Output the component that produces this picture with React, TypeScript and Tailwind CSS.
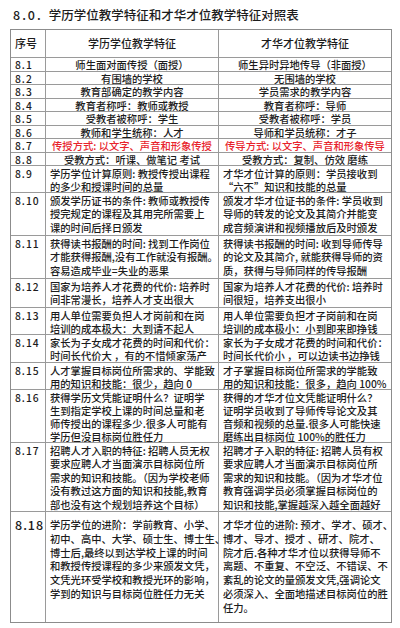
import React from "react";

type Row = {
  no: string;
  left: string[];
  right: string[];
  h: string;
  lh?: string;
  center?: boolean;
  red?: boolean;
};

const rows: Row[] = [
  { no: "8.1", left: ["师生面对面传授（面授）"], right: ["师生异时异地传导（非面授）"], h: "h-[13.5px]", center: true },
  { no: "8.2", left: ["有围墙的学校"], right: ["无围墙的学校"], h: "h-[13.5px]", center: true },
  { no: "8.3", left: ["教育部确定的教学内容"], right: ["学员需求的教学内容"], h: "h-[13.5px]", center: true },
  { no: "8.4", left: ["教育者称呼：教师或教授"], right: ["教育者称呼：导师"], h: "h-[13.5px]", center: true },
  { no: "8.5", left: ["受教者被称呼：学生"], right: ["受教者被称呼：学员"], h: "h-[13.5px]", center: true },
  { no: "8.6", left: ["教师和学生统称：人才"], right: ["导师和学员统称：才子"], h: "h-[13.5px]", center: true },
  { no: "8.7", left: ["传授方式: 以文字、声音和形象传授"], right: ["传导方式: 以文字、声音和形象传导"], h: "h-[13.5px]", center: true, red: true },
  { no: "8.8", left: ["受教方式：听课、做笔记 考试"], right: ["受教方式：复制、仿效 磨练"], h: "h-[13.5px]", center: true },
  {
    no: "8.9",
    left: ["学历学位计算原则: 教授传授出课程", "的多少和授课时间的总量"],
    right: ["才华才位计算的原则：学员接收到", "“六不”知识和技能的总量"],
    h: "h-[27px]",
    lh: "leading-[13px]",
  },
  {
    no: "8.10",
    left: ["颁发学历证书的条件: 教师或教授传", "授完规定的课程及其用完所需要上", "课的时间后择日颁发"],
    right: ["颁发才华才位证书的条件: 学员收到", "导师的转发的论文及其简介并能变", "成音频演讲和视频播放后及时颁发"],
    h: "h-[43px]",
    lh: "leading-[13.6px]",
  },
  {
    no: "8.11",
    left: ["获得读书报酬的时间: 找到工作岗位", "才能获得报酬,没有工作就没有报酬。", "容易造成毕业=失业的恶果"],
    right: ["获得读书报酬的时间: 收到导师传导", "的论文及其简介, 就能获得导师的资", "质，获得与导师同样的传导报酬"],
    h: "h-[43px]",
    lh: "leading-[13.6px]",
  },
  {
    no: "8.12",
    left: ["国家为培养人才花费的代价: 培养时", "间非常漫长，培养人才支出很大"],
    right: ["国家为培养人才花费的代价: 培养时", "间很短，培养支出很小"],
    h: "h-[29px]",
    lh: "leading-[13.6px]",
  },
  {
    no: "8.13",
    left: ["用人单位需要负担人才岗前和在岗", "培训的成本极大：大到请不起人"],
    right: ["用人单位需要负担才子岗前和在岗", "培训的成本极小：小到即来即挣钱"],
    h: "h-[27px]",
    lh: "leading-[13px]",
  },
  {
    no: "8.14",
    left: ["家长为子女成才花费的时间和代价：", "时间长代价大 ，有的不惜倾家荡产"],
    right: ["家长为子女成才花费的时间和代价：", "时间长代价小 ，可以边读书边挣钱"],
    h: "h-[28px]",
    lh: "leading-[13.3px]",
  },
  {
    no: "8.15",
    left: ["人才掌握目标岗位所需求的、学能致", "用的知识和技能：很少，趋向 0"],
    right: ["才子掌握目标岗位所需求的学能致", "用的知识和技能：很多，趋向 100%"],
    h: "h-[27px]",
    lh: "leading-[13px]",
  },
  {
    no: "8.16",
    left: ["获得学历文凭能证明什么？证明学", "生到指定学校上课的时间总量和老", "师传授出的课程多少.很多人可能有", "学历但没目标岗位胜任力"],
    right: ["获得的才华才位文凭能证明什么？", "证明学员收到了导师传导论文及其", "音频和视频的总量.很多人可能快速", "磨练出目标岗位 100%的胜任力"],
    h: "h-[53px]",
    lh: "leading-[13px]",
  },
  {
    no: "8.17",
    left: ["招聘人才入职的特征: 招聘人员无权", "要求应聘人才当面演示目标岗位所", "需求的知识和技能。（因为学校老师", "没有教过这方面的知识和技能,教育", "部也没有这个规划培养这个目标）"],
    right: ["招聘才子入职的特征: 招聘人员有权", "要求应聘人才当面演示目标岗位所", "需求的知识和技能。（因为才华才位", "教育强调学员必须掌握目标岗位的", "知识和技能,掌握越深入越全面越好"],
    h: "h-[69px]",
    lh: "leading-[13.5px]",
  },
];

const last: Row = {
  no: "8.18",
  left: ["学历学位的进阶：学前教育、小学、", "初中、高中、大学、硕士生、博士生、", "博士后,最终以到达学校上课的时间", "和教授传授课程的多少来颁发文凭，", "文凭光环受学校和教授光环的影响，", "学到的知识与目标岗位胜任力无关"],
  right: ["才华才位的进阶: 预才、学才、硕才、", "博才、导才、授才 、研才、院才、", "院才后.各种才华才位以获得导师不", "离题、不重复、不空泛、不错误、不", "紊乱的论文的量颁发文凭,强调论文", "必须深入、全面地描述目标岗位的胜", "任力。"],
  h: "h-[110px]",
};

function Lines({ lines }: { lines: string[] }) {
  return (
    <>
      {lines.map((l, i) => (
        <div key={i} className="whitespace-nowrap">
          {l}
        </div>
      ))}
    </>
  );
}

export default function App() {
  return (
    <div
      className="w-[400px] h-[628px] bg-white text-[#1c1c1c] overflow-hidden"
      style={{ fontFamily: '"Noto Sans CJK SC", "Noto Sans", sans-serif' }}
    >
      {/* title */}
      <div className="h-[29px] pt-[6px] pl-[13px] flex items-start text-[12.5px] leading-[17px] font-medium">
        <span className="tracking-[2px]">8.0.</span>
        <span className="ml-[6px]">学历学位教学特征和才华才位教学特征对照表</span>
      </div>

      <div className="ml-[10px] w-[382px] border border-[#8c8c8c] text-[10.3px] font-medium">
        {/* header */}
        <div className="flex h-[28px] items-center border-b border-[#9a9a9a] text-[11px]">
          <div className="w-[35px] h-full flex items-center pl-[4px] border-r border-[#9a9a9a]">序号</div>
          <div className="w-[173px] h-full flex items-center justify-center border-r border-[#9a9a9a]">学历学位教学特征</div>
          <div className="flex-1 text-center">才华才位教学特征</div>
        </div>

        {rows.map((r) => {
          const body = r.center ? "text-center leading-[13px]" : `pl-[4px] pt-[0.5px] ${r.lh}`;
          return (
            <div key={r.no} className={`flex border-b border-[#9a9a9a] ${r.h} ${r.red ? "text-[#e8232b]" : ""}`}>
              <div
                className={`w-[35px] shrink-0 pl-[4px] border-r border-[#9a9a9a] text-[#1c1c1c] tracking-[1px] ${
                  r.center ? "leading-[13px]" : `pt-[0.5px] ${r.lh}`
                }`}
              >
                {r.no}
              </div>
              <div className={`w-[173px] shrink-0 border-r border-[#9a9a9a] ${body}`}>
                <Lines lines={r.left} />
              </div>
              <div className={`flex-1 ${body}`}>
                <Lines lines={r.right} />
              </div>
            </div>
          );
        })}

        <div className={`flex ${last.h}`}>
          <div className="w-[35px] shrink-0 pl-[4px] pt-[6px] border-r border-[#9a9a9a] text-[12.5px] leading-[14px] tracking-[1px]">
            {last.no}
          </div>
          <div className="w-[173px] shrink-0 pl-[4px] pt-[6px] border-r border-[#9a9a9a] leading-[13.8px]">
            <Lines lines={last.left} />
          </div>
          <div className="flex-1 pl-[4px] pt-[6px] leading-[13.8px]">
            <Lines lines={last.right} />
          </div>
        </div>
      </div>
    </div>
  );
}
